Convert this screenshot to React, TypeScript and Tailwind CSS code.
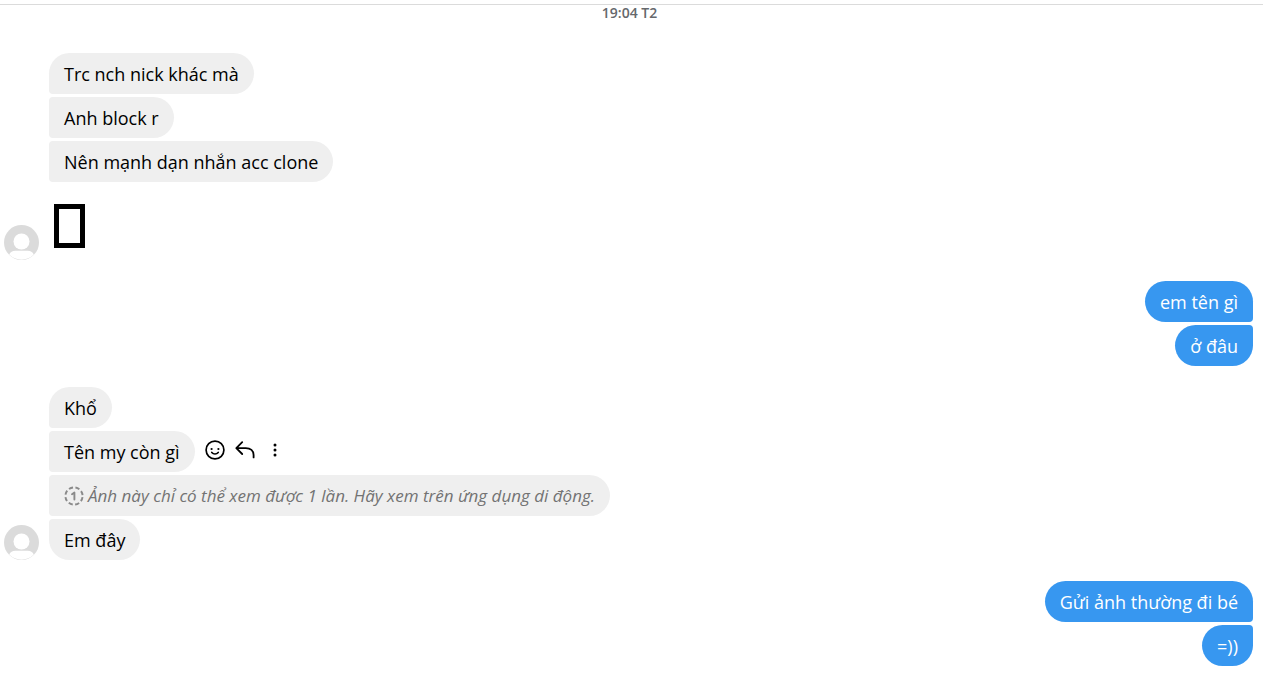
import type { ReactNode } from 'react';
import clsx from 'clsx';

type Corner = 'first' | 'middle' | 'last';

const leftCorners: Record<Corner, string> = {
  first: 'rounded-bl',
  middle: 'rounded-l',
  last: 'rounded-tl',
};

const rightCorners: Record<Corner, string> = {
  first: 'rounded-br',
  middle: 'rounded-r',
  last: 'rounded-tr',
};

function Bubble({ corner, mine, children }: { corner: Corner; mine?: boolean; children: ReactNode }) {
  return (
    <div
      className={clsx(
        'flex min-h-[41px] items-center rounded-[21px] px-[15px] py-2 text-[18px] leading-6',
        mine ? 'bg-[#3797f0] text-white' : 'bg-[#efefef] text-black',
        mine ? rightCorners[corner] : leftCorners[corner],
      )}
    >
      {children}
    </div>
  );
}

function Avatar() {
  return (
    <svg viewBox="0 0 35 35" className="size-[35px] shrink-0" role="img" aria-label="Avatar">
      <circle cx="17.5" cy="17.5" r="17.5" fill="#dbdbdb" />
      <circle cx="17.5" cy="16.5" r="8" fill="#fff" />
      <path d="M5.2 29.4c1.3-2.4 3.2-3.6 6-3.6h12.6c2.8 0 4.7 1.2 6 3.6a17 17 0 0 1-24.6 0Z" fill="#fff" />
    </svg>
  );
}

function Received({ children }: { children: ReactNode }) {
  return (
    <section className="flex items-end gap-[10px] pl-1">
      <Avatar />
      <div className="flex flex-col items-start gap-[3px]">{children}</div>
    </section>
  );
}

function Sent({ children }: { children: ReactNode }) {
  return <section className="flex flex-col items-end gap-[3px] pr-[10px]">{children}</section>;
}

function Actions() {
  return (
    <div className="flex items-center gap-[10px] pb-1">
      <button type="button" aria-label="React">
        <svg viewBox="0 0 20 20" className="size-5" fill="none" stroke="currentColor" strokeLinecap="round">
          <circle cx="10" cy="10" r="8.9" strokeWidth="1.7" />
          <path d="M6.8 12.5c1.7 2 4.7 2 6.4 0" strokeWidth="1.7" />
          <circle cx="6.6" cy="9" r="1.1" fill="currentColor" stroke="none" />
          <circle cx="13.4" cy="9" r="1.1" fill="currentColor" stroke="none" />
        </svg>
      </button>
      <button type="button" aria-label="Reply">
        <svg viewBox="0 0 20 20" className="size-5" fill="none" stroke="currentColor" strokeWidth="1.8" strokeLinecap="round" strokeLinejoin="round">
          <path d="M7.2 2.2 1.3 8.1l5.9 5.9M1.6 8.1h9.2c4.7 0 7.8 2.7 7.8 7v2.3" />
        </svg>
      </button>
      <button type="button" aria-label="More">
        <svg viewBox="0 0 20 20" className="size-5" fill="currentColor">
          <circle cx="10" cy="5" r="1.5" />
          <circle cx="10" cy="10" r="1.5" />
          <circle cx="10" cy="15" r="1.5" />
        </svg>
      </button>
    </div>
  );
}

function ViewOnceIcon() {
  return (
    <svg viewBox="0 0 20 20" className="mr-1 size-5 shrink-0" fill="none" stroke="#8a8a8a" strokeWidth="1.9" aria-hidden="true">
      <circle cx="10" cy="10" r="8.6" strokeDasharray="4.3 2.455" strokeDashoffset="-1.2" />
      <path d="M8 8.2l2.4-1.6v7" strokeLinecap="round" strokeLinejoin="round" />
    </svg>
  );
}

export default function App() {
  return (
    <main className="min-h-screen bg-white pt-1 pb-[26px] font-['Open_Sans','Noto_Sans',sans-serif]">
      <div className="border-t border-[#dbdbdb] pr-1 text-center text-[14px] leading-4 font-semibold text-[#65686c]">
        <time dateTime="19:04">19:04 T2</time>
      </div>

      <div className="flex flex-col gap-[21px] pt-8">
        <Received>
          <Bubble corner="first">Trc nch nick khác mà</Bubble>
          <Bubble corner="middle">Anh block r</Bubble>
          <Bubble corner="middle">Nên mạnh dạn nhắn acc clone</Bubble>
          <div className="px-[5px] pt-[19px] pb-3">
            <div role="img" aria-label="Emoji" className="h-11 w-[31px] border-5 border-black" />
          </div>
        </Received>

        <Sent>
          <Bubble mine corner="first">em tên gì</Bubble>
          <Bubble mine corner="last">ở đâu</Bubble>
        </Sent>

        <Received>
          <Bubble corner="first">Khổ</Bubble>
          <div className="flex items-center gap-[10px]">
            <Bubble corner="middle">Tên my còn gì</Bubble>
            <Actions />
          </div>
          <Bubble corner="middle">
            <ViewOnceIcon />
            <em className="text-[17px] text-[#737373]">Ảnh này chỉ có thể xem được 1 lần. Hãy xem trên ứng dụng di động.</em>
          </Bubble>
          <Bubble corner="last">Em đây</Bubble>
        </Received>

        <Sent>
          <Bubble mine corner="first">Gửi ảnh thường đi bé</Bubble>
          <Bubble mine corner="last">=))</Bubble>
        </Sent>
      </div>
    </main>
  );
}
